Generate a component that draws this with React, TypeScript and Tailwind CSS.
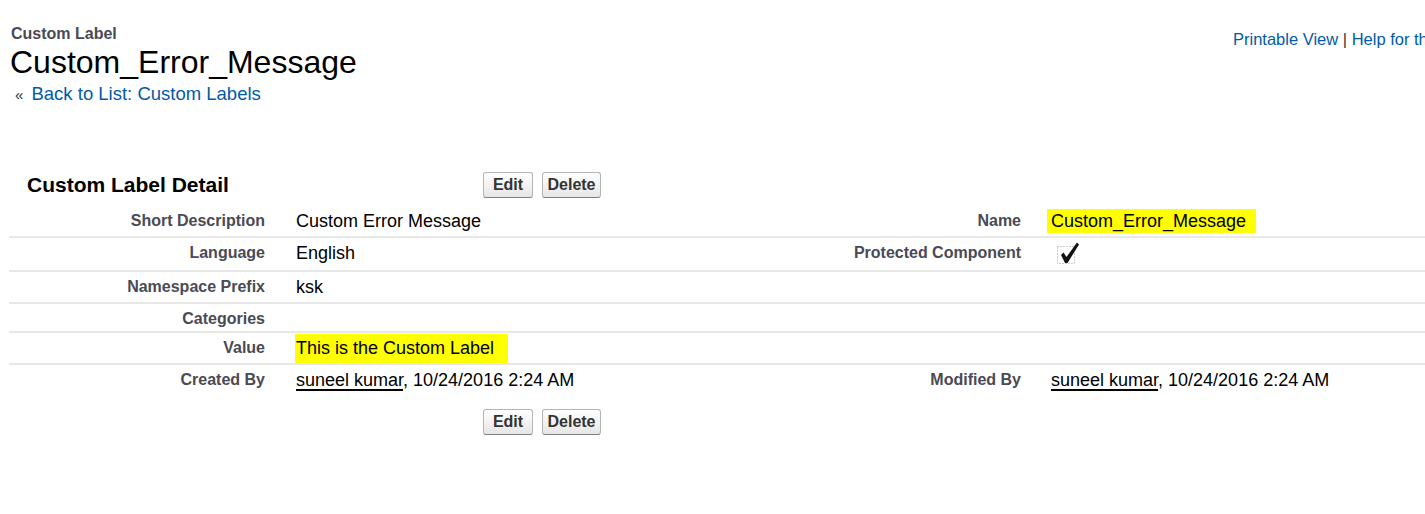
import React from "react";

const Btn = ({ label, w }: { label: string; w: string }) => (
    <button className={`${w} h-[26px] rounded-[3px] border border-[#b5b5b5] border-b-[#7f7f7f] bg-gradient-to-b from-white to-[#e6e6e6] text-[16px] font-bold text-[#333] leading-none`}>
        {label}
    </button>
);

const Buttons = () => (
    <div className="flex gap-[9px]">
        <Btn label="Edit" w="w-[50px]" />
        <Btn label="Delete" w="w-[59px]" />
    </div>
);

const Check = () => (
    <svg width="24" height="22" viewBox="0 0 24 22" className="block">
        <rect x="1.5" y="4.5" width="17" height="17" fill="none" stroke="#9a9a9a" strokeWidth="1" strokeDasharray="1 2" />
        <polygon points="5,13 7.5,10.5 10.5,15 21,0.5 23,2.5 11.5,21 9,21" fill="#111" />
    </svg>
);

const User = () => (
    <>
        <span className="underline decoration-[1.5px] underline-offset-[3px]">suneel kumar</span>, 10/24/2016 2:24 AM
    </>
);

const Row = ({ l1, v1, l2, v2, last }: { l1: string; v1?: React.ReactNode; l2?: string; v2?: React.ReactNode; last?: boolean }) => (
    <div className={`flex ${last ? "" : "border-b-2 border-[#e8e8e8]"}`}>
        <div className="w-[256px] shrink-0 pt-[5px] pb-[3px] text-right text-[16px] leading-[19px] font-bold text-[#4a4a56]">{l1}</div>
        <div className="w-[566px] shrink-0 pl-[31px] py-[4px] text-[18px] leading-[22px] text-black">{v1}</div>
        <div className="w-[190px] shrink-0 pt-[5px] pb-[3px] text-right text-[16px] leading-[19px] font-bold text-[#4a4a56]">{l2}</div>
        <div className="flex-1 pl-[30px] py-[4px] text-[18px] leading-[22px] text-black whitespace-nowrap">{v2}</div>
    </div>
);

export default function App() {
    return (
        <div className="w-[1425px] h-[514px] overflow-hidden bg-white font-['Liberation_Sans',Arial,sans-serif]">
            <div className="flex pl-[10px]">
                <div className="flex-1 pt-[25px]">
                    <div className="text-[16px] leading-[18px] font-bold text-[#4a4a56] pl-[1px]">Custom Label</div>
                    <h1 className="mt-[1px] text-[32px] leading-[36px] text-black">Custom_Error_Message</h1>
                    <div className="mt-[3px] pl-[5px] text-[18.5px] leading-[22px]">
                        <span className="text-[#333] text-[15px] mr-[3px]">«</span>{" "}
                        <a className="text-[#015ba7]">Back to List: Custom Labels</a>
                    </div>
                </div>
                <div className="w-[192px] shrink-0 pt-[28px] whitespace-nowrap text-[16.5px] leading-[22px]">
                    <a className="text-[#015ba7]">Printable View</a> <span className="text-[#333]">|</span>{" "}
                    <a className="text-[#015ba7]">Help for this Page</a>
                </div>
            </div>

            <div className="ml-[9px] mt-[66px]">
                <div className="flex items-center mb-[8px]">
                    <h2 className="w-[474px] shrink-0 pl-[18px] text-[21px] font-bold text-black leading-[26px]">Custom Label Detail</h2>
                    <Buttons />
                </div>
                <Row
                    l1="Short Description"
                    v1="Custom Error Message"
                    l2="Name"
                    v2={<span className="bg-[#ffff00] pl-[4px] pr-[10px] py-[2px] -ml-[4px]">Custom_Error_Message</span>}
                />
                <Row
                    l1="Language"
                    v1="English"
                    l2="Protected Component"
                    v2={<span className="block h-[24px] pl-[5px]"><Check /></span>}
                />
                <Row l1="Namespace Prefix" v1="ksk" />
                <Row l1="Categories" />
                <Row
                    l1="Value"
                    v1={<span className="bg-[#ffff00] pr-[14px] pt-[4px] pb-[5px] -ml-[1px] pl-[1px]">This is the Custom Label</span>}
                />
                <Row l1="Created By" v1={<User />} l2="Modified By" v2={<User />} last />
                <div className="mt-[14px] pl-[474px]">
                    <Buttons />
                </div>
            </div>
        </div>
    );
}
